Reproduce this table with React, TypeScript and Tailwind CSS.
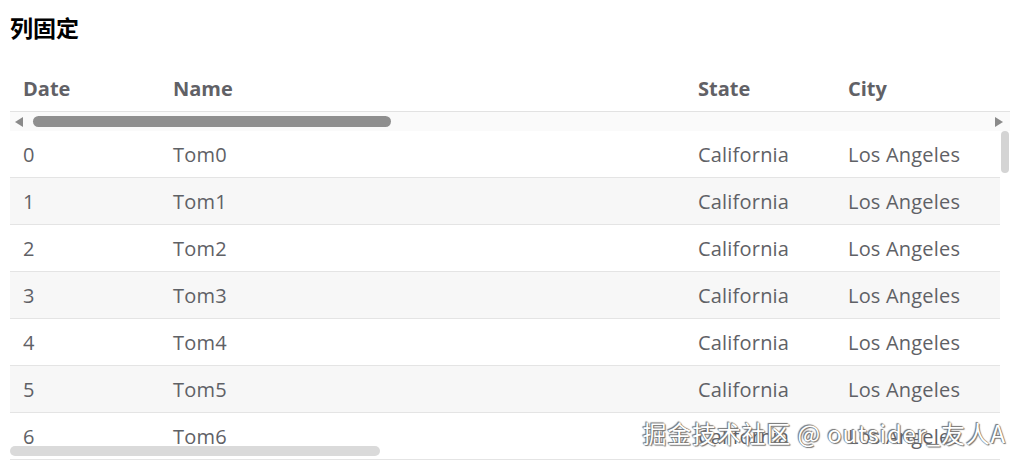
const rows = Array.from({ length: 7 }, (_, i) => ({
  date: String(i),
  name: `Tom${i}`,
  state: 'California',
  city: 'Los Angeles',
}))

const font = { fontFamily: '"Open Sans", "Noto Sans CJK SC", sans-serif' }

function Cells({ date, name, state, city }: { date: string; name: string; state: string; city: string }) {
  return (
    <>
      <div className="w-[150px] shrink-0 pl-[13px]">{date}</div>
      <div className="w-[525px] shrink-0 pl-[13px]">{name}</div>
      <div className="w-[150px] shrink-0 pl-[13px]">{state}</div>
      <div className="w-[150px] shrink-0 pl-[13px]">{city}</div>
    </>
  )
}

export default function App() {
  return (
    <div className="relative h-[461px] overflow-hidden bg-white px-[10px]" style={font}>
      <h1 className="pt-[13px] text-[23px] font-bold leading-[30px] text-black">列固定</h1>

      <div className="mt-[23px] w-[1000px]">
        {/* header */}
        <div className="flex h-[46px] items-center border-b border-[#e2e2e2] text-[20px] font-bold text-[#616166]">
          <Cells date="Date" name="Name" state="State" city="City" />
        </div>

        {/* header scrollbar strip */}
        <div className="flex h-[19px] items-center bg-[#fafafa]">
          <div className="ml-[5px] h-0 w-0 border-y-[5px] border-r-[8px] border-y-transparent border-r-[#8a8a8a]" />
          <div className="ml-[10px] h-[11px] w-[358px] rounded-full bg-[#8f8f8f]" />
          <div className="ml-auto mr-[7px] h-0 w-0 border-y-[5px] border-l-[8px] border-y-transparent border-l-[#8a8a8a]" />
        </div>

        {/* body */}
        <div className="flex">
          <div className="w-[990px] text-[20px] tracking-[0.2px] text-[#5f6166]">
            {rows.map((r, i) => (
              <div
                key={r.date}
                className={`flex h-[47px] items-center border-b border-[#e4e4e4] pt-[1px] ${i % 2 === 1 ? 'bg-[#f7f7f7]' : 'bg-white'}`}
              >
                <Cells {...r} />
              </div>
            ))}
          </div>
          <div className="w-[10px] pl-[1px]">
            <div className="h-[42px] w-[8px] rounded-full bg-[#d4d4d4]" />
          </div>
        </div>
      </div>

      <div className="absolute bottom-[5px] left-[10px] h-[10px] w-[370px] rounded-full bg-[#dadada]" />

      <div
        className="absolute right-[14px] top-[415px] text-[24px] tracking-[0.8px] text-white"
        style={{ fontFamily: '"Noto Sans CJK SC", sans-serif', textShadow: '0 0 1px #555, 1px 1px 1px #777, -1px -1px 1px #777' }}
      >
        掘金技术社区 @ outsider_友人A
      </div>
    </div>
  )
}
